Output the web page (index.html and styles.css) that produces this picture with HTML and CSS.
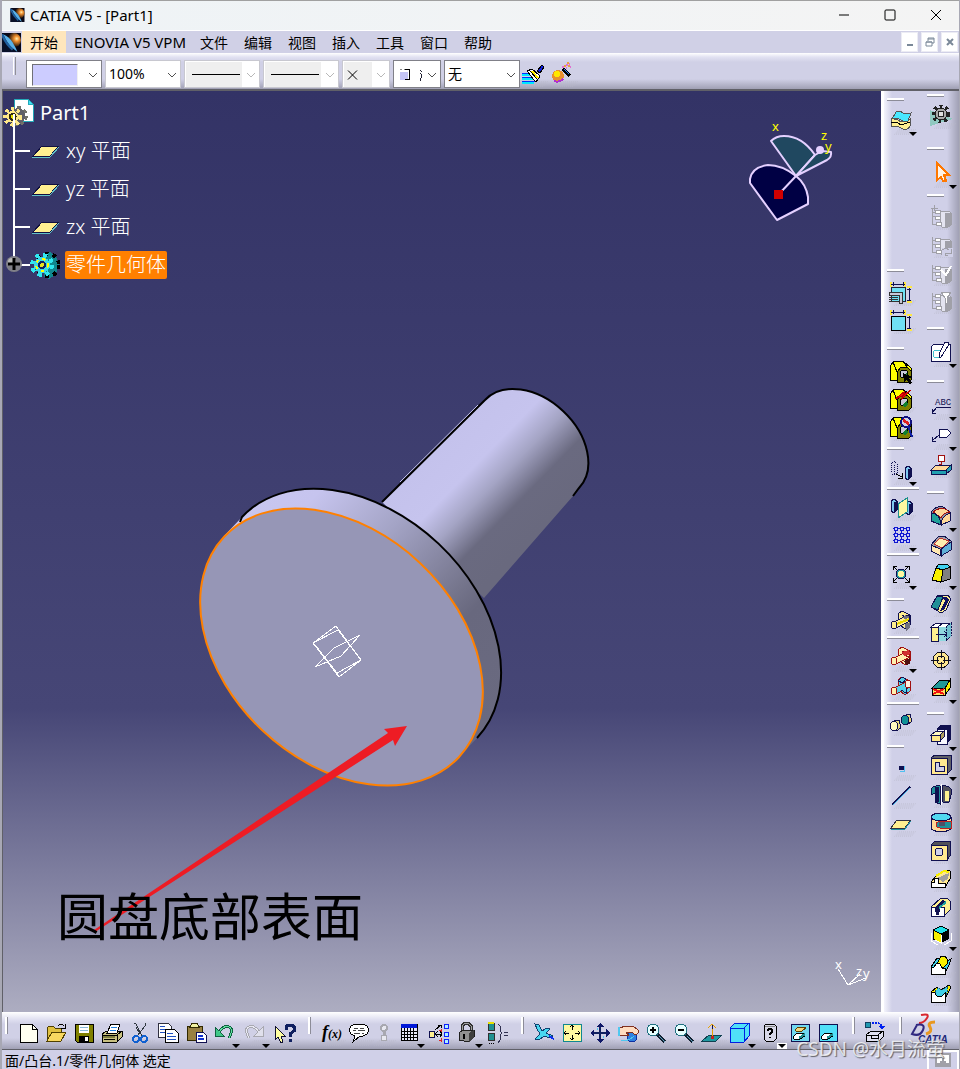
FILE: index.html
```html
<!DOCTYPE html>
<html lang="zh-CN">
<head>
    <meta charset="UTF-8">
    <title>CATIA V5 - [Part1]</title>
    <link rel="stylesheet" href="styles.css">
</head>
<body>

<!-- shapes used by more than one icon -->
<svg class="defs" aria-hidden="true">
    <defs>
        <radialGradient id="sun" cx="70%" cy="40%" r="60%">
            <stop offset="0" stop-color="#fff0b0"/>
            <stop offset=".3" stop-color="#f09030"/>
            <stop offset="1" stop-color="#100808"/>
        </radialGradient>
        <symbol id="logo" viewBox="0 0 16 16">
            <rect width="16" height="16" fill="#080818"/>
            <circle cx="10" cy="6" r="6" fill="url(#sun)"/>
            <path d="M0 2Q6 9 12 16H0z" fill="#081028"/>
            <path d="M1 1Q6 3 9 8T13 16L8 12Q4 8 1 1z" fill="#58b0e8"/>
            <path d="M0 1Q3 9 9 14" stroke="#2060a0" stroke-width="2" fill="none"/>
        </symbol>
        <symbol id="nut" viewBox="0 0 24 24">
            <path d="M1 20V7L4 2L14 1L22 8V14L8 21z" fill="#ffff00" stroke="#000"/>
            <path d="M8 22V12L12 7H18L22 11V20L20 22z" fill="#808000" stroke="#000"/>
            <path d="M4 2L8 12M14 1L18 7" stroke="#000" fill="none"/>
            <circle cx="15" cy="14" r="4" fill="#c8c8d8" stroke="#000"/>
            <path d="M13 17L18 12L19 17L16 19z" fill="#108030"/>
        </symbol>
        <symbol id="prism" viewBox="0 0 8 16">
            <path d="M1 3L4 1L7 3V12L4 15L1 13z" fill="#80c8f0" stroke="#101050"/>
            <path d="M4 4L7 3V12L4 15z" fill="#101050"/>
        </symbol>
        <symbol id="tree" viewBox="0 0 24 24">
            <path d="M13 6H20L22 8V20L19 22H13L11 20V8z" fill="#e4e4f0" stroke="#a0a0a8"/>
            <path d="M16 8H22V20L19 22H16z" fill="#a0a0a8"/>
            <path d="M3 4V19H8M3 11H7M3 7H8" stroke="#a0a0a8"/>
            <path d="M6 5H11V8H6zM6 11H11V14H6zM7 17H12V20H7z" fill="#fff" stroke="#a0a0a8"/>
        </symbol>
        <symbol id="bool" viewBox="0 0 24 24">
            <path d="M9 5L13 2L21 6V16L16 20L10 15z"/>
            <path d="M13 6L17 9V18" fill="none"/>
            <path d="M3 14L19 6L22 9L21 12L7 19z"/>
            <ellipse cx="5" cy="16" rx="3" ry="4"/>
            <ellipse cx="19" cy="9" rx="2" ry="3"/>
        </symbol>
        <symbol id="plane" viewBox="0 0 24 24">
            <path d="M2 16L8 8H22L16 16z" fill="#ffef90" stroke="#303040"/>
            <path d="M2 17H16L22 9" stroke="#2090a0" fill="none"/>
        </symbol>
        <symbol id="node-plane" viewBox="0 0 30 24">
            <path d="M3 17L12 7H29L20 17z" fill="#ffef90" stroke="#101040"/>
            <path d="M2 18H20L29 8" stroke="#60c0c8" fill="none"/>
        </symbol>
        <symbol id="chevron" viewBox="0 0 12 12">
            <path d="M2 4L6 8L10 4" fill="none" stroke="currentColor"/>
        </symbol>
    </defs>
</svg>

<div class="app">
    <header class="titlebar">
        <svg class="logo" aria-hidden="true"><use href="#logo"/></svg>
        <span class="title">CATIA V5 - [Part1]</span>
        <div class="window-buttons">
            <button aria-label="最小化"><svg viewBox="0 0 12 12"><path d="M1 6H11"/></svg></button>
            <button aria-label="最大化"><svg viewBox="0 0 12 12"><rect x="1" y="1" width="10" height="10" rx="1"/></svg></button>
            <button aria-label="关闭"><svg viewBox="0 0 12 12"><path d="M1 1L11 11M11 1L1 11"/></svg></button>
        </div>
    </header>

    <nav class="menubar">
        <svg class="logo logo-big" aria-hidden="true"><use href="#logo"/></svg>
        <a href="#start" class="active">开始</a>
        <a href="#vpm" class="latin">ENOVIA V5 VPM</a>
        <a href="#file">文件</a>
        <a href="#edit">编辑</a>
        <a href="#view">视图</a>
        <a href="#insert">插入</a>
        <a href="#tools">工具</a>
        <a href="#window">窗口</a>
        <a href="#help">帮助</a>
        <div class="mdi-buttons">
            <button aria-label="最小化文档"><svg viewBox="0 0 10 10"><path d="M2 8H8" stroke-width="2"/></svg></button>
            <button aria-label="还原文档"><svg viewBox="0 0 10 10"><path d="M3 4V1H9V6H7M3 2H9M1 5H7V9H1zM1 5H7"/></svg></button>
            <button aria-label="关闭文档"><svg viewBox="0 0 10 10"><path d="M2 2L8 8M8 2L2 8" stroke-width="2"/></svg></button>
        </div>
    </nav>

    <div class="toolbar">
        <span class="grip"></span>
        <div class="combo combo-dark">
            <select aria-label="颜色"><option></option></select>
            <span class="swatch"></span>
            <svg class="chev"><use href="#chevron"/></svg>
        </div>
        <div class="combo">
            <select aria-label="透明度"><option>100%</option></select>
            <svg class="chev"><use href="#chevron"/></svg>
        </div>
        <div class="combo disabled">
            <select aria-label="线宽" disabled><option></option></select>
            <span class="sample"></span>
            <svg class="chev"><use href="#chevron"/></svg>
        </div>
        <div class="combo disabled">
            <select aria-label="线型" disabled><option></option></select>
            <span class="sample"></span>
            <svg class="chev"><use href="#chevron"/></svg>
        </div>
        <div class="combo small disabled">
            <select aria-label="点符号" disabled><option></option></select>
            <svg class="mark thin" viewBox="0 0 28 24"><path d="M4 8L13 17M13 8L4 17" stroke="#000"/></svg>
            <svg class="chev"><use href="#chevron"/></svg>
        </div>
        <div class="combo small combo-dark">
            <select aria-label="渲染样式"><option></option></select>
            <svg class="mark clear" viewBox="0 0 28 24"><rect x="5" y="9" width="8" height="8" fill="#c4c4f4"/><path d="M5 7H7M9 7H11" stroke="#888"/><path d="M10 7H14V17H10" stroke="#000"/><path d="M25 8L27 9M25 11L27 12M27 13L25 18" stroke="#223"/></svg>
            <svg class="chev"><use href="#chevron"/></svg>
        </div>
        <div class="combo combo-dark">
            <select aria-label="图层"><option>无</option></select>
            <svg class="chev"><use href="#chevron"/></svg>
        </div>
        <button class="tool" aria-label="格式刷"><svg class="ico" viewBox="0 0 24 24"><path d="M1 11H9M1 15H12M1 19H14" stroke="#0030ff"/><path d="M1 13H10M1 17H14M1 21H13" stroke="#00e8ff" stroke-width="2"/><path d="M6 9L11 7L19 14L15 20L13 18z" fill="#fff" stroke="#000"/><path d="M9 9L16 17" stroke="#000"/><path d="M11 9L17 16" stroke="#ffee00" stroke-width="2"/><path d="M13 8L18 13" stroke="#000"/><path d="M16 9L21 3L23 5L19 11z" fill="#1020e0" stroke="#000"/></svg></button>
        <button class="tool" aria-label="图形属性向导"><svg class="ico" viewBox="0 0 24 24"><circle cx="7" cy="14" r="6" fill="#e89030"/><circle cx="6" cy="12" r="3" fill="#ffe800"/><path d="M3 19Q8 21 12 17" stroke="#b030d0" stroke-width="2"/><path d="M12 7L19 14" stroke="#000" stroke-width="3"/><path d="M13 7L18 12" stroke="#3080ff"/><path d="M11 5H13M15 3H17M18 2H19M15 6H16M19 5H20" stroke="#e070d0" stroke-width="2"/><path d="M13 4H15M16 1H18M17 4H19" stroke="#e8a040" stroke-width="2"/></svg></button>
    </div>

    <div class="workspace">
        <main class="viewport">
            <svg class="scene" viewBox="3 91 878 921" preserveAspectRatio="xMinYMin meet" role="img" aria-label="Part1">
                <defs>
                    <linearGradient id="shaft" gradientUnits="userSpaceOnUse" x1="434" y1="451" x2="528" y2="543">
                        <stop offset="0" stop-color="#c4c2ec"/>
                        <stop offset=".3" stop-color="#c6c4ee"/>
                        <stop offset=".5" stop-color="#a4a4c4"/>
                        <stop offset=".73" stop-color="#6a6a80"/>
                        <stop offset="1" stop-color="#69697e"/>
                    </linearGradient>
                    <linearGradient id="rim" gradientUnits="userSpaceOnUse" x1="242" y1="517" x2="477" y2="738">
                        <stop offset="0" stop-color="#c8c6f0"/>
                        <stop offset=".12" stop-color="#c6c4ee"/>
                        <stop offset=".36" stop-color="#a4a4c6"/>
                        <stop offset=".64" stop-color="#75758c"/>
                        <stop offset=".72" stop-color="#68687e"/>
                        <stop offset="1" stop-color="#6a6a80"/>
                    </linearGradient>
                </defs>
                <!-- shaft -->
                <path d="M485 400A64 45 43 0 1 579 488L573 496L484 598L382 502z" fill="url(#shaft)"/>
                <path d="M382 502L485 400A64 45 43 0 1 579 488L573 496" stroke="#000" stroke-width="2"/>
                <path d="M478 405L400 482" stroke="#c4c2ec"/>
                <!-- disc -->
                <path d="M242 517A161 115 43.2 0 1 477 738L459 757L224 536z" fill="url(#rim)"/>
                <path d="M240 522L242 517A161 115 43.2 0 1 477 738" stroke="#000" stroke-width="2"/>
                <ellipse cx="341.5" cy="647" rx="161" ry="115" transform="rotate(43.2 341.5 647)" fill="#9696b6" stroke="#ff8000" stroke-width="2"/>
                <!-- origin planes -->
                <g fill="none" stroke="#fff" shape-rendering="crispEdges">
                    <path d="M313 643L336 626L361 660L339 677z"/>
                    <path d="M313 643L338 630L361 660M339 677L337 673L361 660M316 646L337 673"/>
                    <path d="M315 667L334 648L360 635L341 656z"/>
                </g>
                <!-- compass -->
                <g stroke="#e4d0ff" stroke-width="2" stroke-linejoin="round">
                    <path d="M750 183L777 220L808 204V197Q806 184 796 176Q782 165 768 165Q752 167 750 179z" fill="#000044"/>
                    <path d="M771 141Q776 136 784 136Q802 136 815 155L796 176z" fill="#204860"/>
                    <path d="M796 176L815 155L822 151L831 152Q832 157 827 160z" fill="#204860"/>
                    <path d="M796 176L779 194"/>
                </g>
                <circle cx="820" cy="150" r="4" fill="#e4d0ff"/>
                <rect x="774" y="190" width="9" height="9" fill="#d00000"/>
                <g class="axis" fill="#ffff00">
                    <text x="772" y="131">x</text>
                    <text x="821" y="140">z</text>
                    <text x="825" y="151">y</text>
                </g>
                <path d="M838 969L848 985L866 978M848 985L860 974" fill="none" stroke="#fff" shape-rendering="crispEdges"/>
                <g class="axis" fill="#fff">
                    <text x="835" y="969">x</text>
                    <text x="856" y="976">z</text>
                    <text x="863" y="978">y</text>
                </g>
                <!-- callout -->
                <path d="M94 930L388 733L384 729L407 726L395 746L393 740L95 932z" fill="#ee1c24"/>
                <text class="callout" x="57" y="936">圆盘底部表面</text>
            </svg>

            <ul class="tree">
                <li class="root">
                    <svg class="part" viewBox="0 0 32 32"><path d="M12 2H26L31 7V25H12z" fill="#fff" stroke="#20a8b8"/><path d="M26 2V7H31" fill="#40e0f8" stroke="#20a8b8"/><circle cx="15" cy="19" r="9" fill="none" stroke="#707068" stroke-width="3" stroke-dasharray="4 3"/><circle cx="15" cy="19" r="8" fill="#606068"/><circle cx="10" cy="20" r="8" fill="none" stroke="#ffe888" stroke-width="4" stroke-dasharray="3 3"/><circle cx="10" cy="20" r="6" fill="#ffe888"/><circle cx="10" cy="20" r="3" fill="#e8e000" stroke="#302810" stroke-width="2"/></svg>
                    <span>Part1</span>
                </li>
                <li><svg class="node" aria-hidden="true"><use href="#node-plane"/></svg><span>xy 平面</span></li>
                <li><svg class="node" aria-hidden="true"><use href="#node-plane"/></svg><span>yz 平面</span></li>
                <li><svg class="node" aria-hidden="true"><use href="#node-plane"/></svg><span>zx 平面</span></li>
                <li class="selected">
                    <button class="expander" aria-label="展开"><svg viewBox="0 0 18 18"><circle cx="9" cy="9" r="8" fill="#808088"/><circle cx="7" cy="7" r="4" fill="#b8b8b8"/><path d="M9 3V15M3 9H15" stroke="#000" stroke-width="3"/></svg></button>
                    <svg class="node gear" viewBox="0 0 30 30"><path d="M14 4L20 2L24 5L27 9L29 15L27 21L24 26L19 29L14 27z" fill="#10888f"/><circle cx="18" cy="15" r="11" fill="none" stroke="#000" stroke-width="4" stroke-dasharray="4 4"/><circle cx="12" cy="15" r="10" fill="none" stroke="#30e8f0" stroke-width="4" stroke-dasharray="4 4"/><circle cx="12" cy="15" r="8" fill="#38d8e8"/><circle cx="12" cy="15" r="6" fill="none" stroke="#ffff00" stroke-width="2" stroke-dasharray="3 4"/><circle cx="12" cy="15" r="3" fill="#e8e020" stroke="#102060" stroke-width="2"/></svg>
                    <span>零件几何体</span>
                </li>
            </ul>
        </main>

        <aside class="side">
            <div class="column">
                <i class="sep sep-first low"></i>
                <button class="tool more" aria-label="图层管理"><svg class="ico" viewBox="0 0 24 24"><path d="M2 11Q8 10 12 14L21 11V18Q18 24 12 20Q8 17 2 19z" fill="#ffef90" stroke="#555"/><path d="M2 15Q8 13 12 17L21 14" stroke="#000"/><path d="M3 11L7 4Q11 2 14 5Q18 7 22 5L19 13Q15 15 12 12Q8 9 3 11z" fill="#48e8ff" stroke="#555"/></svg></button>
                <i class="sep sep-far"></i>
                <button class="tool" aria-label="尺寸显示"><svg class="ico" viewBox="0 0 24 24"><rect x="2" y="6" width="14" height="14" fill="#70e0f4" stroke="#223"/><path d="M2 1V6M16 1V6" stroke="#ffe840" stroke-width="2"/><path d="M2 3H16M4 1V5M14 1V5M20 6V21M18 8H22M18 19H22" stroke="#101050"/><path d="M18 6H23M18 21H23" stroke="#ffe840" stroke-width="2"/><path d="M0 11H13V22H10V14H0z" fill="#c8c8d8" stroke="#333"/><path d="M0 16H9M0 18H9M0 20H9" stroke="#333"/></svg></button>
                <button class="tool" aria-label="尺寸约束"><svg class="ico" viewBox="0 0 24 24"><rect x="2" y="7" width="14" height="14" fill="#70e0f4" stroke="#000"/><path d="M2 1V6M16 1V6" stroke="#ffe840" stroke-width="2"/><path d="M2 3H16M4 1V5M14 1V5M20 6V21M18 8H22M18 19H22" stroke="#101050"/><path d="M18 6H23M18 21H23" stroke="#ffe840" stroke-width="2"/></svg></button>
                <i class="sep"></i>
                <button class="tool" aria-label="选择几何体"><svg class="ico" viewBox="0 0 24 24"><use href="#nut"/><path d="M14 13L23 17L20 18L23 23L20 24L18 20L15 22z" fill="#000"/></svg></button>
                <button class="tool" aria-label="更新几何体"><svg class="ico" viewBox="0 0 24 24"><use href="#nut"/><path d="M6 11L16 3L14 7L22 2L12 12L14 8z" fill="#f01010" stroke="#c00000"/></svg></button>
                <button class="tool" aria-label="检查几何体"><svg class="ico" viewBox="0 0 24 24"><use href="#nut"/><circle cx="17" cy="6" r="5" fill="#d0d0e8" stroke="#101080" stroke-width="2"/><path d="M14 4L20 8" stroke="#e02020" stroke-width="3"/><path d="M19 10L23 21" stroke="#1020a0" stroke-width="2"/></svg></button>
                <i class="sep sep-tight"></i>
                <button class="tool more" aria-label="平移"><svg class="ico" viewBox="0 0 24 24"><path d="M2 6L5 3L8 6V15L5 17L2 15zM5 7V17" stroke="#101050" stroke-dasharray="1 1"/><path d="M7 16L13 19M13 15V20H9" stroke="#000"/><use href="#prism" x="15" y="7" width="8" height="16"/></svg></button>
                <i class="sep sep-full"></i>
                <button class="tool" aria-label="镜像"><svg class="ico" viewBox="0 0 24 24"><use href="#prism" x="1" y="2" width="8" height="16"/><use href="#prism" x="16" y="4" width="8" height="16"/><path d="M9 8L18 2V16L9 22z" fill="#fff8a0" stroke="#209090"/></svg></button>
                <button class="tool more" aria-label="矩形阵列"><svg class="ico" viewBox="0 0 24 24"><path d="M6 3V19M12 3V19M18 3V19M4 4H20M4 10H20M4 16H20" stroke="#1018d0"/><path d="M5 3H8V6H5zM11 3H14V6H11zM17 3H20V6H17zM5 9H8V12H5zM11 9H14V12H11zM17 9H20V12H17zM5 15H8V18H5zM11 15H14V18H11zM17 15H20V18H17z" fill="#c8c8ff" stroke="#1018d0"/></svg></button>
                <i class="sep sep-full"></i>
                <button class="tool more" aria-label="缩放"><svg class="ico" viewBox="0 0 24 24"><path d="M4 8V4H8M16 4H20V8M4 16V20H8M16 20H20V16M4 4L8 8M20 4L16 8M4 20L8 16M20 20L16 16" stroke="#000"/><circle cx="12" cy="12" r="5" fill="#2098a0" stroke="#101050"/><circle cx="12" cy="12" r="3" fill="#fff8a0"/></svg></button>
                <i class="sep sep-mid"></i>
                <button class="tool" aria-label="装配"><svg class="ico" viewBox="0 0 24 24"><use href="#bool" fill="#ffef90" stroke="#101050"/><path d="M16 15L21 13V19L17 22zM13 9L16 6L21 8L17 10z" fill="#707080"/><path d="M8 15L20 10" stroke="#e8d800" stroke-width="2"/></svg></button>
                <i class="sep sep-full"></i>
                <button class="tool more" aria-label="移除"><svg class="ico" viewBox="0 0 24 24"><use href="#bool" fill="#fff0b0" stroke="#a01010"/><path d="M13 7L20 5L21 9L15 11z" fill="#d03030"/><path d="M15 16L21 13V19L17 20z" fill="#501010"/></svg></button>
                <button class="tool" aria-label="联合修剪"><svg class="ico" viewBox="0 0 24 24"><use href="#bool" fill="#58d0e8" stroke="#a01010"/><ellipse cx="5" cy="16" rx="3" ry="4" fill="#fff0b0" stroke="#a01010"/><ellipse cx="19" cy="9" rx="3" ry="4" fill="#fff0e0" stroke="#a01010"/><path d="M9 6L13 2L17 4L14 8zM12 15L17 18V13" fill="#58d0e8" stroke="#101050"/></svg></button>
                <i class="sep sep-full"></i>
                <button class="tool" aria-label="块移除"><svg class="ico" viewBox="0 0 24 24"><path d="M5 10L10 9L12 17L7 20z" fill="#e8d880" stroke="#101050"/><ellipse cx="5" cy="15" rx="4" ry="5" fill="#fff8c0" stroke="#101050"/><path d="M17 4L21 3L23 10L18 14z" fill="#e8d880" stroke="#101050"/><ellipse cx="16" cy="9" rx="4" ry="5" fill="#109098" stroke="#101050"/></svg></button>
                <i class="sep sep-mid"></i>
                <button class="tool" aria-label="点"><svg class="ico" viewBox="0 0 24 24"><rect x="10" y="10" width="5" height="4" fill="#101050"/><path d="M15 10V15H11" stroke="#50c0f0"/></svg></button>
                <button class="tool" aria-label="直线"><svg class="ico" viewBox="0 0 24 24"><path d="M3 21L21 3" stroke="#101050" stroke-width="2"/><path d="M4 21L21 4" stroke="#50c0f0"/></svg></button>
                <button class="tool" aria-label="平面"><svg class="ico" viewBox="0 0 24 24"><use href="#plane"/></svg></button>
            </div>

            <div class="column">
                <i class="sep sep-first"></i>
                <button class="tool" aria-label="工作台"><svg class="ico" viewBox="0 0 24 24"><path d="M1 6V22L24 15z" fill="#90c8c0"/><circle cx="12" cy="10" r="8" fill="none" stroke="#222" stroke-width="3" stroke-dasharray="3 3"/><circle cx="12" cy="10" r="6" fill="#a8a8a8" stroke="#222"/><circle cx="12" cy="10" r="3" fill="#e0e0e0" stroke="#222"/></svg></button>
                <i class="sep sep-loose"></i>
                <button class="tool more" aria-label="选择"><svg class="ico" viewBox="0 0 24 24"><path d="M8 2V19L12 16L14 20H17L15 14H20z" fill="#fff4e8" stroke="#ff7800" stroke-width="2"/></svg></button>
                <i class="sep sep-tight"></i>
                <button class="tool" aria-label="目录浏览" disabled><svg class="ico" viewBox="0 0 24 24"><use href="#tree"/><path d="M5 0V6M2 3H9" stroke="#a0a0a8"/></svg></button>
                <button class="tool" aria-label="目录刷新" disabled><svg class="ico" viewBox="0 0 24 24"><use href="#tree"/><path d="M13 15H24V24H13z" fill="#d0d0e8"/><path d="M13 17Q17 14 20 17M22 16V20H17Q15 23 19 22" stroke="#a0a0a8"/></svg></button>
                <button class="tool" aria-label="目录链接" disabled><svg class="ico" viewBox="0 0 24 24"><use href="#tree"/><path d="M12 9L17 14L22 5" stroke="#fff" stroke-width="2"/></svg></button>
                <button class="tool" aria-label="目录筛选" disabled><svg class="ico" viewBox="0 0 24 24"><use href="#tree"/><path d="M12 3H22L18 9V14H16V9z" fill="#fff" stroke="#a0a0a8"/></svg></button>
                <i class="sep"></i>
                <button class="tool more" aria-label="草图"><svg class="ico" viewBox="0 0 24 24"><path d="M5 4H21V21H2V7z" fill="#fff" stroke="#101050"/><circle cx="8" cy="14" r="4" stroke="#40c0d0"/><path d="M16 2H19V6L12 17L10 18V14z" fill="#fff" stroke="#101050"/></svg></button>
                <i class="sep"></i>
                <button class="tool more" aria-label="带引出线的文本"><svg class="ico" viewBox="0 0 24 24"><text x="6" y="12" class="abc">ABC</text><path d="M22 14H8L3 20M3 16V20H7" stroke="#101050"/></svg></button>
                <button class="tool more" aria-label="标志注解"><svg class="ico" viewBox="0 0 24 24"><path d="M10 6H18L22 10L18 14H10z" fill="#fff" stroke="#101050"/><path d="M10 12L3 18M3 14V18H7" stroke="#101050"/></svg></button>
                <button class="tool" aria-label="基准"><svg class="ico" viewBox="0 0 24 24"><rect x="9" y="2" width="6" height="6" fill="#fff" stroke="#a01010"/><path d="M12 8V13M8 14H16L12 11z" stroke="#a01010" fill="#e06060"/><path d="M2 17L7 12H22L17 17z" fill="#ffd898" stroke="#101050"/><path d="M2 17H17V21H2zM17 17L22 12V17L17 21z" fill="#20a0b0" stroke="#101050"/></svg></button>
                <i class="sep"></i>
                <button class="tool more" aria-label="倒圆角"><svg class="ico" viewBox="0 0 24 24"><path d="M2 8Q8 1 14 3L21 8V17L12 21L2 17z" fill="#9090a0" stroke="#101050"/><path d="M4 8Q10 3 16 5L21 8Q14 9 12 14L7 10z" fill="#ffd898" stroke="#a01010"/><path d="M2 9Q11 9 12 21L2 17z" fill="#20a098" stroke="#101050"/><path d="M12 21Q12 12 21 9V17z" fill="#ffd898" stroke="#101050"/></svg></button>
                <button class="tool" aria-label="倒角"><svg class="ico" viewBox="0 0 24 24"><path d="M2 11L9 3L15 2L22 7V16L12 22L2 17z" fill="#a0a0a8" stroke="#101050"/><path d="M2 11L11 15L12 22L2 17z" fill="#ffe8b0" stroke="#101050"/><path d="M5 10L11 4L20 7L13 14z" fill="#fff0b0" stroke="#c03030"/><path d="M12 15L22 8V16L12 22z" fill="#60b0d8" stroke="#101050"/></svg></button>
                <button class="tool more" aria-label="拔模"><svg class="ico" viewBox="0 0 24 24"><path d="M7 6L10 2H18L21 5L14 9z" fill="#40d0f0" stroke="#000"/><path d="M7 6L14 8L12 20L3 18z" fill="#f8f000" stroke="#000"/><path d="M14 8L21 5V17L12 20z" fill="#808080" stroke="#000"/></svg></button>
                <button class="tool" aria-label="抽壳"><svg class="ico" viewBox="0 0 24 24"><path d="M2 15L8 4L19 3L22 7L17 18L12 21z" fill="#ffef90" stroke="#101050"/><path d="M2 15L8 4L14 5L9 18z" fill="#209098" stroke="#101050"/><path d="M13 5H17L20 8L15 18L11 19L16 9z" fill="#101060"/></svg></button>
                <button class="tool" aria-label="厚度"><svg class="ico" viewBox="0 0 24 24"><path d="M2 7L7 3H21L17 7z" fill="#fff" stroke="#101050"/><path d="M2 7H9V21H2z" fill="#ffef90" stroke="#101050"/><path d="M10 7H17V21H10z" fill="#90d8e0"/><path d="M17 7L22 3V16L17 21z" fill="#70c0d0" stroke="#101050" stroke-dasharray="2 1"/><path d="M7 14H18M15 11L18 14L15 17M9 7L14 3" stroke="#101050"/></svg></button>
                <button class="tool" aria-label="螺纹"><svg class="ico" viewBox="0 0 24 24"><circle cx="12" cy="12" r="8" fill="#ffe890" stroke="#101020"/><circle cx="12" cy="12" r="4" stroke="#101020"/><path d="M12 2V10M12 14V22M2 12H10M14 12H22" stroke="#101020"/></svg></button>
                <button class="tool more" aria-label="移除面"><svg class="ico" viewBox="0 0 24 24"><path d="M3 12L11 4H21L16 12z" fill="#209898" stroke="#000"/><path d="M16 12L21 4V12L16 19z" fill="#f8f000" stroke="#000"/><rect x="3" y="12" width="13" height="7" fill="#ffe060" stroke="#000"/><path d="M4 13L15 18M15 13L4 18" stroke="#f01010" stroke-width="2"/></svg></button>
                <i class="sep sep-mid"></i>
                <button class="tool more" aria-label="凸台"><svg class="ico" viewBox="0 0 24 24"><path d="M8 5L12 2H22V17L17 21H8z" fill="#101050"/><rect x="8" y="6" width="10" height="15" fill="#f8f8ff" stroke="#101050"/><path d="M2 12L7 8H15L11 12z" fill="#fff8c0" stroke="#101050"/><path d="M11 12L15 8V14L11 18z" fill="#b0a060" stroke="#101050"/><rect x="2" y="12" width="9" height="6" fill="#ffe888" stroke="#101050"/></svg></button>
                <button class="tool more" aria-label="凹槽"><svg class="ico" viewBox="0 0 24 24"><path d="M2 5L6 2H22V17L18 21z" fill="#606068" stroke="#101050"/><rect x="2" y="5" width="16" height="16" fill="#ffe890" stroke="#101050"/><path d="M6 9H10V13H15V18H6z" fill="#d0d0e8" stroke="#101050"/></svg></button>
                <button class="tool" aria-label="旋转体"><svg class="ico" viewBox="0 0 24 24"><path d="M2 6Q5 2 11 3V21L6 19V10L2 12z" fill="#209098" stroke="#101050"/><path d="M13 3Q19 2 22 6V12L20 19H14z" fill="#505060" stroke="#101050"/><rect x="16" y="8" width="4" height="10" fill="#fff090"/><path d="M8 4V19" stroke="#101050" stroke-width="4"/><path d="M12 1V22" stroke="#fff"/></svg></button>
                <button class="tool" aria-label="旋转槽"><svg class="ico" viewBox="0 0 24 24"><path d="M2 6V18Q12 24 22 18V6z" fill="#ffd898" stroke="#101050"/><ellipse cx="12" cy="6" rx="10" ry="4" fill="#50d8f0" stroke="#101050"/><path d="M22 10H11Q7 11 7 14T11 17H22z" fill="#209098" stroke="#c02020"/><path d="M10 11H16V15H10z" fill="#505068"/></svg></button>
                <button class="tool" aria-label="孔"><svg class="ico" viewBox="0 0 24 24"><path d="M2 6L6 2H21V17L18 21z" fill="#505058" stroke="#101050"/><rect x="2" y="6" width="16" height="15" fill="#ffe890" stroke="#101050"/><circle cx="10" cy="13" r="4" fill="#d0d0e8" stroke="#101050"/></svg></button>
                <button class="tool" aria-label="肋"><svg class="ico" viewBox="0 0 24 24"><path d="M2 15L6 10L15 3L21 4V12L16 20H2z" fill="#ffe890" stroke="#000"/><path d="M8 11L20 6L19 12L14 15z" fill="#a0a0a0"/><path d="M2 15H5V11H9V16H16V20H2z" fill="#fff" stroke="#000"/><path d="M7 9L15 4L20 5" stroke="#f8f000" stroke-width="2"/></svg></button>
                <button class="tool" aria-label="开槽"><svg class="ico" viewBox="0 0 24 24"><path d="M2 12L12 3L16 3L19 4L21 6V15L15 21H2z" fill="#ffef90" stroke="#101050"/><path d="M2 12H6V16H10V12H15V21H2z" fill="#fff" stroke="#101050"/><path d="M6 12L14 5L17 7L10 14V20H7z" fill="#101050"/><path d="M10 13L17 7" stroke="#20a0a0" stroke-width="2"/></svg></button>
                <button class="tool more" aria-label="加强肋"><svg class="ico" viewBox="0 0 24 24"><path d="M4 7L12 3L20 7L12 11z" fill="#20e0e8" stroke="#000"/><path d="M4 7L12 11V20L4 16z" fill="#f8f000" stroke="#000"/><path d="M20 7L12 11V20L20 16z" fill="#000"/><path d="M2 10V18L9 22M22 10V18L15 22M12 12V20L6 17" stroke="#fff"/></svg></button>
                <button class="tool" aria-label="多截面实体"><svg class="ico" viewBox="0 0 24 24"><path d="M2 14L8 5L12 7L18 8L22 6L20 12L16 20H2z" fill="#40d0e8" stroke="#000"/><path d="M8 11L12 3H16L18 6V11L15 14H11z" fill="#f8f000" stroke="#000"/><path d="M2 14H5L8 10L11 11L13 15H16V21H2z" fill="#fff" stroke="#000"/></svg></button>
                <button class="tool" aria-label="已移除的多截面实体"><svg class="ico" viewBox="0 0 24 24"><path d="M2 11L8 6L12 9L20 4L22 6L16 18V20H2z" fill="#f8f000" stroke="#000"/><path d="M6 11L9 7L13 9L18 6V12L15 18H9z" fill="#40d0e8" stroke="#205060" stroke-dasharray="2 1"/><path d="M2 11L6 12Q9 20 16 12V21H2z" fill="#fff" stroke="#000"/></svg></button>
            </div>
        </aside>
    </div>

    <div class="bottombar">
        <i class="vsep first"></i>
        <button class="tool" aria-label="新建"><svg class="ico" viewBox="0 0 24 24"><path d="M4 3H16L21 8V21H4z" fill="#fffff0" stroke="#000"/><path d="M16 3V8H21" stroke="#000"/></svg></button>
        <button class="tool" aria-label="打开"><svg class="ico" viewBox="0 0 24 24"><path d="M3 7L5 5H9L11 7H17V12H8L3 20z" fill="#e0c040" stroke="#504000"/><path d="M3 20L8 11H22L17 20z" fill="#f8d860" stroke="#504000"/><path d="M14 5Q17 2 20 5M21 3V7H17" stroke="#000"/></svg></button>
        <button class="tool" aria-label="保存"><svg class="ico" viewBox="0 0 24 24"><path d="M3 3H21V21H5L3 19z" fill="#808000" stroke="#000"/><rect x="7" y="4" width="10" height="8" fill="#fff"/><path d="M8 6H16M8 9H16" stroke="#88b8d8"/><rect x="7" y="15" width="10" height="6" fill="#000"/><rect x="13" y="16" width="3" height="4" fill="#fff"/></svg></button>
        <button class="tool" aria-label="打印"><svg class="ico" viewBox="0 0 24 24"><path d="M2 13L7 10H22V16L17 21H2z" fill="#c8c080" stroke="#000"/><path d="M7 12L11 3H20L17 12z" fill="#fff" stroke="#000"/><path d="M11 6H17M10 9H16" stroke="#2080e0"/><path d="M2 14H17L22 10M17 14V21M4 18H15" stroke="#000"/><path d="M3 16H15" stroke="#808040" stroke-width="2"/></svg></button>
        <button class="tool" aria-label="剪切"><svg class="ico" viewBox="0 0 24 24"><path d="M6 2L8 3L14 15M18 2L17 5L9 15M8 6L12 13" stroke="#303840"/><circle cx="8" cy="18" r="3" stroke="#1060d0" stroke-width="2"/><circle cx="16" cy="18" r="3" stroke="#1060d0" stroke-width="2"/></svg></button>
        <button class="tool" aria-label="复制"><svg class="ico" viewBox="0 0 24 24"><path d="M2 2H12L15 5V16H2z" fill="#fff" stroke="#303040"/><path d="M4 5H9M4 8H12M4 11H12" stroke="#2050c0"/><path d="M9 8H18L22 12V21H9z" fill="#fff" stroke="#000"/><path d="M11 12H17M11 15H20M11 18H20" stroke="#2050c0"/></svg></button>
        <button class="tool" aria-label="粘贴"><svg class="ico" viewBox="0 0 24 24"><path d="M3 5H18V19H3z" fill="#988040" stroke="#302800"/><path d="M6 6L8 2H13L15 6z" fill="#f0f0a0" stroke="#302800"/><path d="M12 11H19L22 14V21H12z" fill="#fff" stroke="#101050"/><path d="M14 15H19M14 18H20" stroke="#1030d0" stroke-width="2"/></svg></button>
        <button class="tool more" aria-label="撤销"><svg class="ico" viewBox="0 0 24 24"><path d="M7 11Q12 4 17 6T17 17" stroke="#106040" stroke-width="3"/><path d="M3 6V15H12z" fill="#40c888" stroke="#106040"/><path d="M7 11Q12 4 17 6T17 17" stroke="#60e0a0"/></svg></button>
        <button class="tool more" aria-label="重做" disabled><svg class="ico" viewBox="0 0 24 24"><path d="M17 11Q12 4 7 6T7 17" stroke="#a8a8b0" stroke-width="3"/><path d="M21 6V15H12z" fill="#e0e0ec" stroke="#a8a8b0"/><path d="M17 11Q12 4 7 6T7 17" stroke="#e8e8f4"/></svg></button>
        <button class="tool" aria-label="这是什么"><svg class="ico" viewBox="0 0 24 24"><path d="M3 5V19L6 16L9 22L11 21L9 15H13z" fill="#ffffa0" stroke="#101030"/><path d="M14 9V6L16 4H20L22 6V10L18 13V16" stroke="#102060" stroke-width="3"/><path d="M18 18V21" stroke="#102060" stroke-width="3"/></svg></button>
        <i class="vsep"></i>
        <button class="tool" aria-label="公式"><svg class="ico" viewBox="0 0 24 24"><text x="3" y="17" class="fx">f<tspan class="fx-arg">(x)</tspan></text></svg></button>
        <button class="tool" aria-label="注释"><svg class="ico" viewBox="0 0 24 24"><path d="M8 3H16L20 5L22 9L20 13L16 15H13L6 21L8 15L4 13L2 9L4 5z" fill="#fff" stroke="#000"/><path d="M7 7H11M13 7H17M6 9H9M11 9H18M7 12H13M15 12H17" stroke="#444"/></svg></button>
        <button class="tool narrow" aria-label="检查" disabled><svg class="ico" viewBox="0 0 24 24"><circle cx="12" cy="7" r="3" stroke="#a8a8b0" stroke-width="2" fill="#e8e8f0"/><path d="M12 10V15" stroke="#a8a8b0" stroke-width="3"/><circle cx="12" cy="17" r="3" stroke="#a8a8b0" fill="#e8e8f0"/></svg></button>
        <button class="tool more" aria-label="设计表"><svg class="ico" viewBox="0 0 24 24"><rect x="4" y="3" width="16" height="16" fill="#e8e8f8" stroke="#000"/><rect x="4" y="3" width="16" height="4" fill="#0018d8"/><path d="M4 10H20M4 13H20M4 16H20M7 7V19M10 7V19M13 7V19M16 7V19" stroke="#000"/></svg></button>
        <button class="tool" aria-label="知识"><svg class="ico" viewBox="0 0 24 24"><rect x="2" y="10" width="5" height="6" fill="#ffef90" stroke="#101050"/><path d="M8 13H15M8 9L14 4M11 4H14V7M11 10L8 13L11 16M13 10L15 13L13 16" stroke="#000"/><path d="M17 3H21V7H17zM17 11H21V15H17zM17 18H21V22H17z" fill="#b0f0ff" stroke="#1020ff"/><path d="M14 8V11M12 9H15M14 17V21M12 19H15" stroke="#e02020"/></svg></button>
        <button class="tool more" aria-label="锁定"><svg class="ico" viewBox="0 0 24 24"><path d="M7 10V5L10 2H13L16 5V10" stroke="#303030" stroke-width="3"/><path d="M7 10V5L10 2H13L16 5V9" stroke="#a0a0a0"/><path d="M4 12L8 9H19V16L14 21L4 19z" fill="#909090" stroke="#202020"/><path d="M14 12L19 9V16L14 21z" fill="#404040"/><path d="M9 13V18" stroke="#000" stroke-width="2"/></svg></button>
        <button class="tool" aria-label="等效尺寸"><svg class="ico" viewBox="0 0 24 24"><rect x="3" y="2" width="6" height="7" fill="#209090" stroke="#303030"/><path d="M3 2H9" stroke="#e8e000" stroke-width="2"/><rect x="3" y="12" width="6" height="7" fill="#209090" stroke="#303030"/><path d="M4 22H9" stroke="#000" stroke-dasharray="1 1"/><path d="M13 3L15 5V10L17 12L15 14V19L13 22M19 11H23M19 14H23" stroke="#303050"/></svg></button>
        <i class="vsep"></i>
        <button class="tool" aria-label="飞行模式"><svg class="ico" viewBox="0 0 24 24"><path d="M3 3L7 4L10 10L15 7L18 8L14 12L21 15L18 17L12 15L7 19L3 18L8 13L5 8z" fill="#48d8f0" stroke="#104070"/><path d="M17 15L22 18" stroke="#1030f0" stroke-width="2"/></svg></button>
        <button class="tool" aria-label="全部适应"><svg class="ico" viewBox="0 0 24 24"><rect x="3" y="3" width="18" height="17" fill="#fff8a0" stroke="#108890"/><path d="M12 4V9M12 14V19M4 12H9M15 12H20M10 6L12 4L14 6M10 17L12 19L14 17M6 10L4 12L6 14M18 10L20 12L18 14" stroke="#000"/></svg></button>
        <button class="tool" aria-label="平移视图"><svg class="ico" viewBox="0 0 24 24"><path d="M12 5V19M5 12H19" stroke="#102060" stroke-width="2"/><path d="M12 2L16 6H8zM12 22L8 18H16zM2 12L6 8V16zM22 12L18 16V8z" fill="#101868"/><path d="M9 9V7M15 17V15" stroke="#50c8f0"/></svg></button>
        <button class="tool" aria-label="旋转视图"><svg class="ico" viewBox="0 0 24 24"><circle cx="16" cy="16" r="5" fill="#3080e0" stroke="#1030a0"/><path d="M3 7L10 5L17 5L22 9V12L20 14L15 11L10 12L13 14L9 15L3 14z" fill="#ffdcc0" stroke="#803020"/><path d="M3 6V15" stroke="#50c8f0" stroke-width="2"/><path d="M5 19Q12 21 18 15" stroke="#50c8f0"/></svg></button>
        <button class="tool" aria-label="放大"><svg class="ico" viewBox="0 0 24 24"><path d="M13 13L21 21" stroke="#102030" stroke-width="4"/><circle cx="9" cy="9" r="6" fill="#e8ffff" stroke="#207080"/><path d="M9 6V12M6 9H12" stroke="#000" stroke-width="2"/><path d="M15 15L21 21" stroke="#60a0c0"/></svg></button>
        <button class="tool" aria-label="缩小"><svg class="ico" viewBox="0 0 24 24"><path d="M13 13L21 21" stroke="#102030" stroke-width="4"/><circle cx="9" cy="9" r="6" fill="#e8ffff" stroke="#207080"/><path d="M6 9H12" stroke="#000" stroke-width="2"/><path d="M15 15L21 21" stroke="#60a0c0"/></svg></button>
        <button class="tool" aria-label="法线视图"><svg class="ico" viewBox="0 0 24 24"><path d="M2 20L9 14H22L16 20z" fill="#2098a0" stroke="#104050"/><path d="M12 16V3" stroke="#101050"/><path d="M12 16V8M8 7L12 3L16 7" stroke="#e8a000"/><rect x="11" y="15" width="3" height="3" fill="#c02020"/></svg></button>
        <button class="tool more" aria-label="等轴测视图"><svg class="ico" viewBox="0 0 24 24"><path d="M2 7L7 2H21V15L16 21H2z" fill="#50e0f8" stroke="#0020e0"/><path d="M2 7H16V21M16 7L21 2" stroke="#0020e0"/></svg></button>
        <button class="tool more light" aria-label="着色"><svg class="ico" viewBox="0 0 24 24"><path d="M6 5L8 3H16L18 5V18L16 20H8L6 18z" fill="#d8d8e8" stroke="#000"/><path d="M7 5Q12 7 17 5" stroke="#888"/><path d="M10 10V9L11 8H13L14 9V11L12 13V14M12 16V17" stroke="#000" stroke-width="2"/></svg></button>
        <button class="tool" aria-label="隐藏/显示"><svg class="ico" viewBox="0 0 24 24"><rect x="3" y="3" width="18" height="17" fill="#70d8f0" stroke="#101050"/><path d="M7 9L10 6H17L18 7L14 10H8z" fill="#f0d880" stroke="#604000"/><path d="M5 16L9 12L16 13L17 15L12 18H6z" fill="#fff" stroke="#000"/><path d="M11 17L17 13" stroke="#209090" stroke-width="2"/></svg></button>
        <button class="tool" aria-label="交换可视空间"><svg class="ico" viewBox="0 0 24 24"><rect x="3" y="3" width="18" height="17" fill="#50e0f8" stroke="#101050"/><path d="M5 16L9 12L16 13L17 15L12 18H6z" fill="#fff" stroke="#000"/><path d="M11 17L17 13" stroke="#209090" stroke-width="2"/></svg></button>
        <i class="vsep"></i>
        <button class="tool" aria-label="目录"><svg class="ico" viewBox="0 0 24 24"><circle cx="5" cy="4" r="3" fill="#2098b0" stroke="#104060"/><path d="M9 2Q16 0 19 6" stroke="#0020f0" stroke-width="2" stroke-dasharray="2 1"/><path d="M15 5H22L19 9z" fill="#0020f0"/><path d="M3 14L8 10H20V16L16 20H3zM3 14H15V20M15 14L20 10M8 14V17H15" fill="#e0e0f0" stroke="#000"/></svg></button>
        <i class="vsep"></i>
        <svg class="ds" viewBox="0 0 42 34" role="img" aria-label="CATIA">
            <path d="M11 2Q20 0 17 5T9 10" fill="none" stroke="#d82830" stroke-width="2"/>
            <path d="M6 12Q16 10 13 17T2 21L7 12" fill="none" stroke="#302880" stroke-width="2"/>
            <path d="M25 9Q17 9 20 14T16 21" fill="none" stroke="#e89820" stroke-width="3"/>
            <text x="8" y="30">CATIA</text>
        </svg>
    </div>

    <footer class="statusbar">
        <span>面/凸台.1/零件几何体 选定</span>
        <button class="status-box" aria-label="对话框"><svg viewBox="0 0 20 16"><rect x="3" y="2" width="14" height="10" fill="#fff" stroke="#a0a0a8" stroke-width="2"/><path d="M10 4V9M7 10H13M2 14H18" stroke="#a0a0a8" stroke-width="2"/></svg></button>
        <span class="watermark">CSDN @水月流萤</span>
    </footer>
</div>

</body>
</html>
```
FILE: styles.css
```css
* {
    box-sizing: border-box;
}

body {
    margin: 0;
    background: #d0d0e8;
    color: #000;
    font: 14px/20px "Noto Sans", "Noto Sans CJK SC", sans-serif;
}

button {
    margin: 0;
    padding: 0;
    border: none;
    background: none;
}

.defs {
    position: absolute;
    width: 0;
    height: 0;
}

.app {
    display: flex;
    flex-direction: column;
    min-height: 100vh;
    border-left: 2px solid #a8a8b4;
    border-right: 1px solid #a8a8b4;
}

/* title */
.titlebar {
    display: flex;
    align-items: center;
    height: 31px;
    padding: 0 0 2px 8px;
    gap: 5px;
    border-top: 1px solid #a0a0a0;
    border-bottom: 1px solid #fff;
    background: linear-gradient(90deg, #eef3f6, #f4f4f4);
}

.title {
    font-size: 15px;
}

.logo {
    width: 15px;
    height: 14px;
}

.logo-big {
    width: 19px;
    height: 19px;
}

.window-buttons {
    display: flex;
    margin-left: auto;
}

.window-buttons button {
    display: flex;
    align-items: center;
    justify-content: center;
    width: 46px;
    height: 28px;
}

.window-buttons svg {
    width: 12px;
    height: 12px;
    fill: none;
    stroke: #000;
}

/* menu */
.menubar {
    display: flex;
    align-items: center;
    height: 22px;
    background: #d0d0e6;
}

.menubar a {
    height: 22px;
    padding: 0 8px;
    color: #000;
    line-height: 23px;
    text-decoration: none;
}

.menubar .active {
    margin-left: 1px;
    background: #ffe6bc;
}

.menubar .latin {
    padding-right: 6px;
    font-size: 15px;
}

.mdi-buttons {
    display: flex;
    gap: 3px;
    margin-left: auto;
    padding-right: 1px;
}

.mdi-buttons button {
    display: flex;
    align-items: center;
    justify-content: center;
    width: 17px;
    height: 20px;
    border: 1px solid #ececf4;
    background: #fff;
}

.mdi-buttons svg {
    width: 10px;
    height: 10px;
    fill: none;
    stroke: #7a8898;
}

/* attribute toolbar */
.toolbar {
    display: flex;
    gap: 3px;
    height: 38px;
    padding: 7px 0 0 11px;
    border-bottom: 2px solid #606068;
    background: linear-gradient(#fff, #e2e2f2 4px, #d0d0e6 9px, #d0d0e6 26px, #a0a0b4 36px);
}

.grip {
    width: 3px;
    height: 18px;
    margin: -3px 7px 0 0;
    border-right: 1px solid #909098;
    border-left: 1px solid #fff;
}

.combo {
    position: relative;
    width: 76px;
    height: 28px;
    border: 1px solid #c8c8d0;
    background: #fff;
}

.combo-dark {
    border-color: #808088;
}

.small {
    width: 48px;
}

.combo select {
    width: 100%;
    height: 100%;
    padding: 0 3px;
    border: none;
    outline: none;
    background: none;
    color: #000;
    font: inherit;
    appearance: none;
}

.combo > svg,
.combo > span {
    position: absolute;
    pointer-events: none;
}

.combo .chev {
    top: 8px;
    right: 2px;
    width: 12px;
    height: 12px;
    color: #505050;
}

.disabled .chev {
    color: #b8b8b8;
}

.swatch {
    top: 3px;
    left: 5px;
    width: 46px;
    height: 22px;
    border: 1px solid #707078;
    border-right-color: #f0f0f0;
    border-bottom-color: #f0f0f0;
    background: #ccccff;
}

.sample {
    top: 1px;
    left: 1px;
    width: 56px;
    height: 25px;
    background: linear-gradient(#000, #000) 6px 12px / 48px 1px no-repeat #efefef;
}

.mark {
    top: 1px;
    left: 1px;
    width: 28px;
    height: 25px;
    fill: none;
    background: #efefef;
    shape-rendering: crispEdges;
}

.thin {
    shape-rendering: auto;
}

.clear {
    background: none;
}

/* tool buttons */
.tool {
    position: relative;
    display: flex;
    flex: none;
    align-items: flex-start;
    width: 28px;
    height: 28px;
}

/* dithered shadow under each icon */
.tool::before {
    content: "";
    position: absolute;
    right: 1px;
    bottom: 1px;
    width: 18px;
    height: 6px;
    background: repeating-conic-gradient(#b8b8c8 0 25%, transparent 0 50%) 0 0 / 2px 2px;
    transform: skewX(-40deg);
    opacity: .6;
}

.ico {
    position: relative;
    flex: none;
    width: 24px;
    height: 24px;
    margin: 2px;
    fill: none;
    stroke: none;
    shape-rendering: crispEdges;
}

.toolbar .tool {
    margin-left: -4px;
}

.toolbar .tool + .tool {
    margin-left: -1px;
}

.more::after {
    content: "";
    position: absolute;
    border: 4px solid transparent;
    border-top-color: #000;
    border-bottom: none;
}

.abc {
    fill: #101050;
    font: 9px "Liberation Mono", monospace;
}

.fx {
    fill: #000;
    font: italic bold 18px "Liberation Serif", serif;
}

.fx-arg {
    font-size: 12px;
}

/* workspace */
.workspace {
    display: flex;
    flex: 1;
}

.viewport {
    position: relative;
    flex: 1;
    overflow: hidden;
    border-left: 1px solid #606068;
    background: linear-gradient(#333366, #464676 67%, #adadc1);
}

.scene {
    position: absolute;
    inset: 0;
    width: 100%;
    height: 100%;
    fill: none;
}

.axis {
    font: 13px "Noto Sans", sans-serif;
}

.callout {
    fill: #000;
    font: 51px "Noto Sans CJK SC", sans-serif;
}

.tree {
    position: relative;
    width: 240px;
    margin: 0;
    padding: 3px 0 0;
    list-style: none;
    color: #fff;
    font-size: 20px;
    font-weight: 300;
}

.tree li {
    position: relative;
    display: flex;
    align-items: center;
    gap: 5px;
    height: 38px;
    padding-left: 27px;
}

.tree li:not(.root)::before {
    content: "";
    position: absolute;
    bottom: 18px;
    left: 10px;
    width: 15px;
    height: 36px;
    border: solid #fff;
    border-width: 0 0 2px 2px;
}

.tree .root {
    padding-left: 0;
    font-weight: 400;
}

.part {
    width: 31px;
    height: 32px;
    shape-rendering: crispEdges;
}

.node {
    width: 30px;
    height: 24px;
    shape-rendering: crispEdges;
}

.gear {
    height: 30px;
}

.tree span {
    padding: 0 1px;
    line-height: 28px;
}

.selected span {
    border-radius: 2px;
    background: #ff8000;
}

.expander {
    position: absolute;
    top: 9px;
    left: 2px;
    width: 18px;
    height: 18px;
}

.expander svg {
    display: block;
}

/* side toolbars */
.side {
    display: flex;
    justify-content: space-between;
    width: 78px;
    padding-left: 3px;
    border-left: 3px solid #fff;
    background: linear-gradient(90deg, #f4f4fc, #d0d0e8 8px, #d0d0e8 63px, #a0a0b4);
}

.column {
    display: flex;
    flex-direction: column;
    width: 32px;
}

.column .more {
    height: 30px;
}

.column .more::after {
    top: 26px;
    right: -2px;
}

.sep {
    flex: none;
    width: 17px;
    height: 23px;
    padding-top: 12px;
}

.sep::before {
    content: "";
    display: block;
    border-top: 2px solid #fff;
    border-bottom: 1px solid #8c8c98;
}

.sep-first {
    height: 11px;
    padding-top: 3px;
}

.sep-first.low {
    height: 15px;
    padding-top: 7px;
}

.sep-mid {
    height: 17px;
    padding-top: 8px;
}

.sep-tight {
    height: 14px;
    padding-top: 5px;
}

.sep-loose {
    height: 29px;
    padding-top: 17px;
}

.sep-far {
    height: 143px;
    padding-top: 133px;
}

.sep-full {
    width: 32px;
    height: 8px;
    padding-top: 1px;
}

/* bottom toolbar */
.bottombar {
    display: flex;
    align-items: center;
    height: 38px;
    padding-bottom: 2px;
    border-bottom: 1px solid #606068;
    background: linear-gradient(#fff, #e2e2f2 7px, #d0d0e6 12px, #d0d0e6 26px, #a0a0b4);
}

.bottombar .tool {
    margin-top: 6px;
}

.bottombar .more {
    width: 30px;
}

.bottombar .more::after {
    right: 0;
    bottom: -1px;
}

.bottombar .narrow {
    width: 22px;
}

.narrow .ico {
    margin: 2px -1px;
}

.light::after {
    box-shadow: 0 0 0 1px #fff;
    background: #fff;
}

.vsep {
    flex: none;
    width: 3px;
    height: 17px;
    margin: -8px 6px 0 10px;
    border-left: 2px solid #fff;
    border-right: 1px solid #8c8c98;
}

.vsep.first {
    margin-left: 3px;
}

.ds {
    width: 42px;
    height: 34px;
    margin-left: 2px;
}

.ds text {
    fill: #202878;
    font: italic bold 10px "Liberation Sans", sans-serif;
}

/* status */
.statusbar {
    position: relative;
    display: flex;
    justify-content: space-between;
    height: 19px;
    padding-left: 3px;
    line-height: 21px;
}

.status-box {
    width: 32px;
    border: 2px solid #fff;
    border-bottom: none;
}

.status-box svg {
    width: 20px;
    height: 16px;
}

.watermark {
    position: absolute;
    right: 14px;
    bottom: 9px;
    color: rgba(255, 255, 255, .75);
    font-size: 19px;
    text-shadow: 1px 1px 1px #606068;
}
```
